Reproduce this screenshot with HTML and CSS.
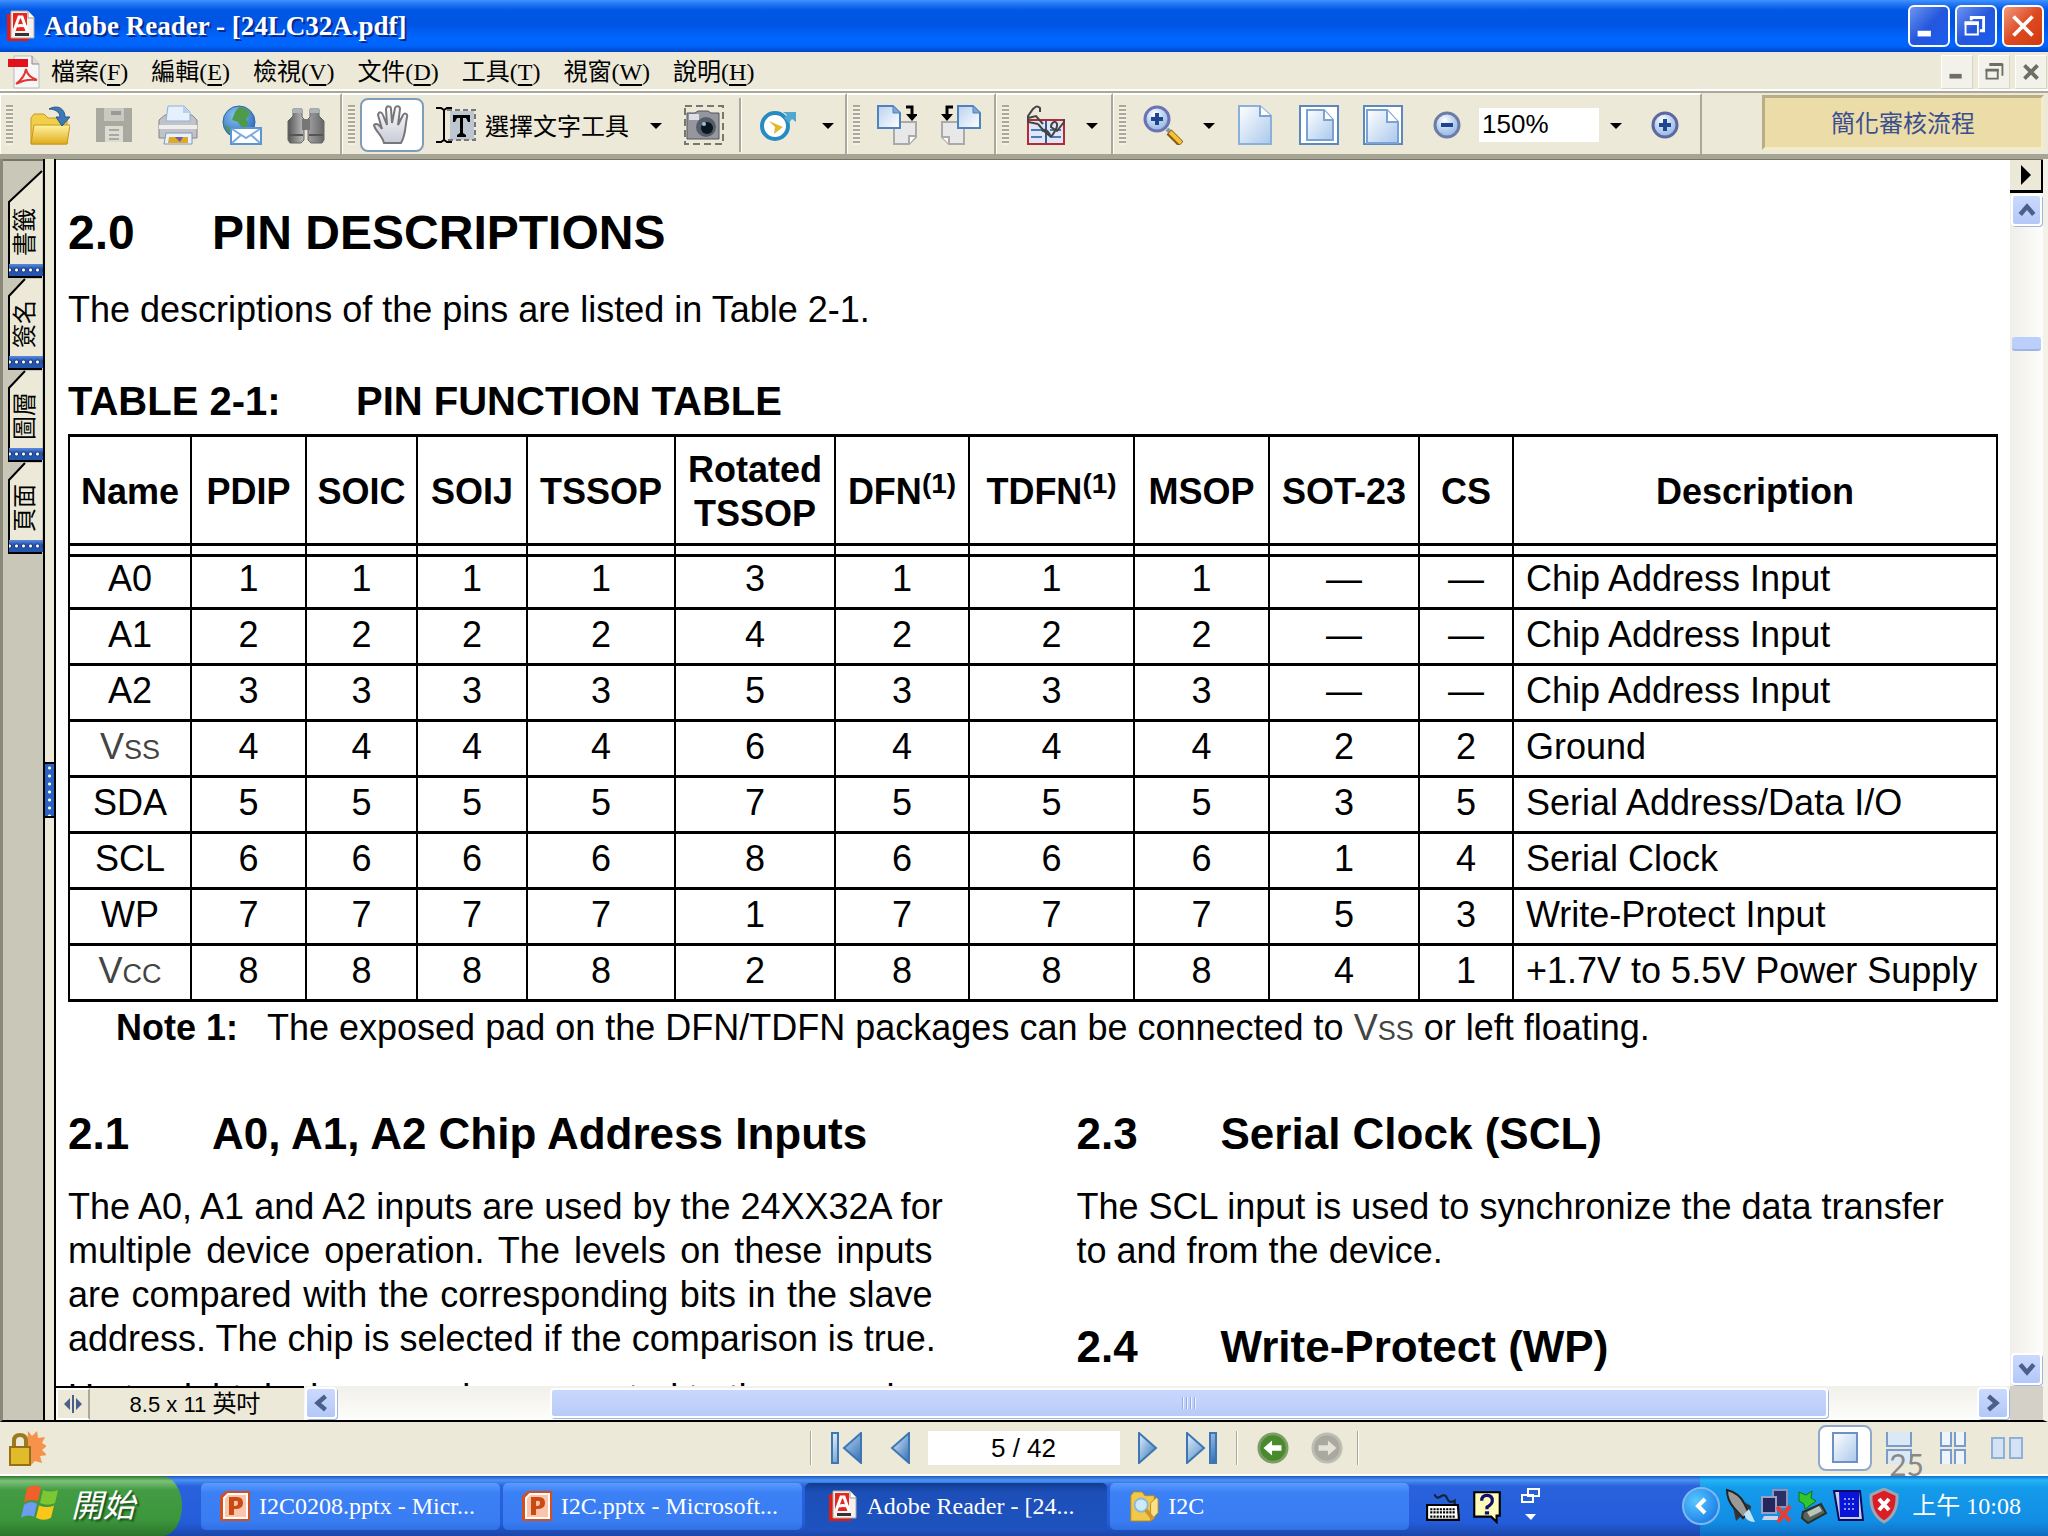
FILE: index.html
```html
<!DOCTYPE html>
<html lang="zh-Hant">
<head>
<meta charset="utf-8">
<title>Adobe Reader - [24LC32A.pdf]</title>
<link rel="stylesheet" href="styles.css">
</head>
<body>
<svg class="defs" aria-hidden="true">
  <defs>
    <linearGradient id="pg" x1="0" y1="0" x2="1" y2="1"><stop offset="0" stop-color="#b9d2f0"/><stop offset="1" stop-color="#fff"/></linearGradient>
    <linearGradient id="pgr" x1="0" y1="0" x2="1" y2="1"><stop offset="0" stop-color="#fff"/><stop offset="1" stop-color="#a9c8ec"/></linearGradient>
    <linearGradient id="fold" x1="0" y1="0" x2="0" y2="1"><stop offset="0" stop-color="#fff3a0"/><stop offset="1" stop-color="#e0ac1c"/></linearGradient>
    <linearGradient id="nav" x1="0" y1="0" x2="1" y2="1"><stop offset="0" stop-color="#e3f2fc"/><stop offset="1" stop-color="#2d6cb4"/></linearGradient>
    <radialGradient id="ball" cx=".4" cy=".3" r=".8"><stop offset="0" stop-color="#fff"/><stop offset=".5" stop-color="#b7d0ee"/><stop offset="1" stop-color="#8bb0de"/></radialGradient>
    <radialGradient id="globe" cx=".4" cy=".3" r=".8"><stop offset="0" stop-color="#8cc4f4"/><stop offset="1" stop-color="#1f5fb4"/></radialGradient>
    <linearGradient id="metal" x1="0" y1="0" x2="1" y2="0"><stop offset="0" stop-color="#555"/><stop offset=".4" stop-color="#b5b5b5"/><stop offset="1" stop-color="#666"/></linearGradient>
    <linearGradient id="glove" x1="0" y1="0" x2="0" y2="1"><stop offset="0" stop-color="#fff"/><stop offset="1" stop-color="#c8cad6"/></linearGradient>
    <symbol id="i-adobe" viewBox="0 0 30 32"><path d="M1 4h22v27H1z" fill="#e01b12"/><path d="M5 1h17l6 6v21H5z" fill="#f4f0ee" stroke="#aaa"/><path d="M7 3h14v18H7z" fill="#e5271d"/><path d="M22 1v7h6" fill="#fff" stroke="#999"/><path d="M8 21l5-14h3l5 14M11 16c4-1 6-1 10 1" fill="none" stroke="#fff" stroke-width="3"/><path d="M9 23h14v3H9z" fill="#333"/></symbol>
    <symbol id="i-ppt" viewBox="0 0 32 32"><path d="M1 6l6-5h24v30H1z" fill="#d3501c"/><path d="M5 8l4-4h19v24H5z" fill="#fbc4ac" stroke="#fff" stroke-width="2"/><path d="M10 7h8q6 0 6 6t-8 6h-1v6h-5M15 11v5h1q3 0 3-3t-3-2z" fill="#cb4a12" fill-rule="evenodd"/></symbol>
    <symbol id="i-plus" viewBox="0 0 28 28"><circle cx="14" cy="14" r="12" fill="url(#ball)" stroke="#5d67a0" stroke-width="3"/><path d="M8 14h12M14 8v12" stroke="#1f4590" stroke-width="4"/></symbol>
    <symbol id="i-minus" viewBox="0 0 28 28"><circle cx="14" cy="14" r="12" fill="url(#ball)" stroke="#6d7ba8" stroke-width="3"/><path d="M8 14h12" stroke="#1f4590" stroke-width="4"/></symbol>
    <symbol id="i-chev" viewBox="0 0 16 16"><path d="M2 12l6-7 6 7" fill="none" stroke="#4a5f8a" stroke-width="4"/></symbol>
  </defs>
</svg>

<header class="titlebar">
  <svg class="ico-app"><use href="#i-adobe"/></svg>
  <h1 class="window-title">Adobe Reader - [24LC32A.pdf]</h1>
  <div class="window-buttons">
    <button class="win-btn" aria-label="最小化"><svg viewBox="0 0 40 40"><path d="M8 25h14v6H8z" fill="#fff"/></svg></button>
    <button class="win-btn" aria-label="還原"><svg viewBox="0 0 40 40"><path d="M15 14v-3h13v14h-4M15 11h13" fill="none" stroke="#fff" stroke-width="3"/><path d="M9 17h13v12H9z" fill="none" stroke="#fff" stroke-width="2"/><path d="M8 17h15" stroke="#fff" stroke-width="4"/></svg></button>
    <button class="win-btn win-close" aria-label="關閉"><svg viewBox="0 0 40 40"><path d="M10 10l20 20M30 10L10 30" stroke="#fff" stroke-width="4"/></svg></button>
  </div>
</header>

<nav class="menubar">
  <svg class="ico-doc" viewBox="0 0 32 34"><path d="M6 1h18l7 8v24H6z" fill="#f6f6f6" stroke="#bbb"/><path d="M24 1v8h7" fill="#ddd" stroke="#888"/><path d="M0 4h20v8H0z" fill="#e1121b"/><path d="M8 29c4-3 9-9 10-15 1 6 5 9 11 11-7-1-14 0-21 4z" fill="none" stroke="#e1372f" stroke-width="2"/></svg>
  <button class="menu">檔案(<u>F</u>)</button>
  <button class="menu">編輯(<u>E</u>)</button>
  <button class="menu">檢視(<u>V</u>)</button>
  <button class="menu">文件(<u>D</u>)</button>
  <button class="menu">工具(<u>T</u>)</button>
  <button class="menu">視窗(<u>W</u>)</button>
  <button class="menu">說明(<u>H</u>)</button>
  <div class="mdi-buttons">
    <button class="mdi" aria-label="最小化文件"><svg viewBox="0 0 32 32"><path d="M8 18h13v5H8z" fill="#6f6e64"/></svg></button>
    <button class="mdi" aria-label="還原文件"><svg viewBox="0 0 32 32"><path d="M12 8h13v12M8 14h12v9H8z" fill="none" stroke="#6f6e64" stroke-width="2"/><path d="M11 8h14M7 14h14" stroke="#6f6e64" stroke-width="3"/></svg></button>
    <button class="mdi" aria-label="關閉文件"><svg viewBox="0 0 32 32"><path d="M9 9l14 14M23 9L9 23" stroke="#6f6e64" stroke-width="4"/></svg></button>
  </div>
</nav>

<div class="toolbar">
  <div class="group g-file">
    <span class="grip"></span>
    <button class="tool" aria-label="開啟"><svg viewBox="0 0 40 40"><path d="M1 13l3-4h10l4 4h19v26H1z" fill="#f2cf4a" stroke="#c8971a"/><path d="M4 20h36l-3 19H1z" fill="url(#fold)" stroke="#c8971a"/><path d="M19 4C28-1 35 4 35 12h5l-8 9-6-9h4c0-5-5-8-11-8z" fill="#3d78b8" stroke="#2a5688"/></svg></button>
    <button class="tool" aria-label="儲存"><svg viewBox="0 0 40 40"><path d="M2 3h36v34H2z" fill="#a9a9a0"/><path d="M10 3h20v13H10z" fill="#c9c9c0"/><path d="M17 6h10v4H17z" fill="#999"/><path d="M11 21h18v16H11z" fill="#dcdcd4"/><path d="M15 25h10M15 30h10M15 34h10" stroke="#a9a9a0" stroke-width="2"/></svg></button>
    <button class="tool" aria-label="列印"><svg viewBox="0 0 40 40"><path d="M1 15l6-5h27l5 5v18H1z" fill="#c2c3c8" stroke="#85868e"/><path d="M10 1h16l6 6v9H8z" fill="#e5f0fb" stroke="#8bb1d8"/><path d="M25 1v7h7" fill="#b3d0ee"/><path d="M1 20h38v4H1z" fill="#eee"/><path d="M8 28h26v11H6z" fill="#e8f2fb" stroke="#8098b0"/><path d="M11 32h19v6H10z" fill="#e0a92a"/><path d="M17 32l5 5 3-5" fill="#7a55a0"/></svg></button>
    <button class="tool" aria-label="電子郵件"><svg viewBox="0 0 40 40"><circle cx="17" cy="17" r="16" fill="url(#globe)" stroke="#2b66a8"/><path d="M17 2q7 0 11 6l-4 6 3 5-6 5-5-7-6-2 3-8zM3 20l6 3 3 8q-7-3-9-11z" fill="#4f9a48"/><path d="M9 23h30v16H9z" fill="#fff" stroke="#5a94d8" stroke-width="2"/><path d="M10 24l14 9 14-9M10 38l9-8M38 38l-9-8" fill="none" stroke="#7aaae0" stroke-width="2"/></svg></button>
    <button class="tool" aria-label="搜尋"><svg viewBox="0 0 40 40"><path d="M7 4h9v8l2 2v21l-3 3H4l-2-3V16l5-5zM33 4h-9v8l-2 2v21l3 3h11l2-3V16l-5-5z" fill="url(#metal)" stroke="#666"/><path d="M16 14h8v11h-8z" fill="#777"/><path d="M7 4h9v4H7zM24 4h9v4h-9z" fill="#aab3ba"/><path d="M3 30h14M23 30h14" stroke="#555" stroke-width="2"/></svg></button>
  </div>
  <div class="group g-select">
    <span class="grip"></span>
    <button class="tool selected" aria-label="手形工具"><svg viewBox="0 0 40 40"><path d="M12 38c-2-8-9-12-10-18 3-3 6 1 8 4L6 10c1-4 4-3 5 0l4 10L14 4c1-4 5-3 5 0l1 14 3-15c1-3 5-2 5 1l-2 16 5-10c2-3 5-1 4 2-2 9-1 18-6 26z" fill="url(#glove)" stroke="#777" stroke-width="2"/></svg></button>
    <button class="text-tool"><svg viewBox="0 0 42 40"><path d="M15 6h24v29H15z" fill="#bcc7d2"/><path d="M12 5h28v30H12" fill="none" stroke="#777" stroke-width="2" stroke-dasharray="5 3"/><path d="M1 3h5l3 2 3-2h5M1 37h5l3-2 3 2h5M9 4v32" fill="none" stroke="#000" stroke-width="2"/><path d="M18 10h17v7h-2l-2-4h-3v15l3 2v2h-9v-2l3-2V13h-3l-2 4h-2z"/></svg>選擇文字工具</button>
    <button class="caret" aria-label="選取工具選單"></button>
    <button class="tool snap" aria-label="快照"><svg viewBox="0 0 40 40"><path d="M1 1h38v38H1z" fill="none" stroke="#77776d" stroke-width="2" stroke-dasharray="7 4"/><path d="M3 8h8l3-2h10l3 2h8v26H3z" fill="#96969f" stroke="#55555d"/><path d="M5 9h10v6H5z" fill="#dedee8"/><circle cx="22" cy="22" r="10" fill="#555e68"/><circle cx="23" cy="23" r="6" fill="#0b1620"/><circle cx="20" cy="19" r="2" fill="#9dc3d8"/></svg></button>
    <span class="sep"></span>
    <button class="tool" aria-label="下一步"><svg viewBox="0 0 40 40"><circle cx="17" cy="21" r="13" fill="#fff" stroke="#268bc2" stroke-width="4"/><path d="M25 7h13v10l-4-3-3 4-5-5 3-3z" fill="#51a9cf"/><path d="M11 16l14 6-9 7 1-7z" fill="#e0b92e"/></svg></button>
    <button class="caret" aria-label="下一步選單"></button>
  </div>
  <div class="group g-rotate">
    <span class="grip"></span>
    <button class="tool" aria-label="順時針旋轉"><svg viewBox="0 0 40 40"><path d="M17 17h22v15l-7 7H17z" fill="#e8e8e8" stroke="#aaa" stroke-width="2"/><path d="M39 31h-7v8" fill="#fff" stroke="#aaa" stroke-width="2"/><path d="M1 1h15l7 7v15H1z" fill="url(#pg)" stroke="#5082bd" stroke-width="2"/><path d="M16 1v7h7" fill="#7fa8d8" stroke="#5082bd"/><path d="M29 2h6v10" fill="none" stroke="#000" stroke-width="3"/><path d="M29 9h12l-6 7z"/></svg></button>
    <button class="tool" aria-label="逆時針旋轉"><svg viewBox="0 0 40 40"><path d="M1 17h22v22H8l-7-7z" fill="#e8e8e8" stroke="#aaa" stroke-width="2"/><path d="M1 32h7v7" fill="#fff" stroke="#aaa" stroke-width="2"/><path d="M17 1h15l7 7v15H17z" fill="url(#pg)" stroke="#5082bd" stroke-width="2"/><path d="M32 1v7h7" fill="#7fa8d8" stroke="#5082bd"/><path d="M12 2H6v10" fill="none" stroke="#000" stroke-width="3"/><path d="M0 9h12l-6 7z"/></svg></button>
  </div>
  <div class="group g-review">
    <span class="grip"></span>
    <button class="tool" aria-label="檢閱"><svg viewBox="0 0 40 40"><path d="M2 15h36v24H2z" fill="#e0e6f8" stroke="#b52a34" stroke-width="2"/><path d="M20 16v22" stroke="#2d6090" stroke-width="2"/><path d="M5 25h11M5 32h11M24 25h11M24 32h11" stroke="#4a78b8" stroke-width="2"/><path d="M14 7V3c-3-3-5-1-7 1L2 11v6l10 2M2 13l8-2 7 8M12 19l6 7 7 6c-2-5-5-8-7-7s-2 1 0 1M25 32c3-4 7-9 6-13s-6-2-6 3l6 4 7-9v-3" fill="none" stroke="#444" stroke-width="2"/></svg></button>
    <button class="caret" aria-label="檢閱選單"></button>
  </div>
  <div class="group g-zoom">
    <span class="grip"></span>
    <button class="tool" aria-label="放大工具"><svg viewBox="0 0 40 40"><path d="M24 24l5 5" stroke="#89a" stroke-width="4"/><path d="M26 27l12 12" stroke="#8a5a12" stroke-width="7"/><path d="M27 27l11 11" stroke="#f3c332" stroke-width="4"/><circle cx="14" cy="14" r="12" fill="url(#ball)" stroke="#6b73b4" stroke-width="3"/><path d="M8 14h12M14 8v12" stroke="#1f4590" stroke-width="4"/></svg></button>
    <button class="caret" aria-label="縮放選單"></button>
    <button class="tool" aria-label="實際大小"><svg viewBox="0 0 40 40"><path d="M4 1h21l11 10v28H4z" fill="url(#pgr)" stroke="#8db0da" stroke-width="2"/><path d="M25 1v10h11" fill="#fff" stroke="#7aa2d2" stroke-width="2"/></svg></button>
    <button class="tool" aria-label="符合頁面"><svg viewBox="0 0 40 40"><path d="M1 1h38v38H1z" fill="#fff" stroke="#5c89bd" stroke-width="2"/><path d="M8 5h17l9 10v20H8z" fill="url(#pgr)" stroke="#7aa2d2" stroke-width="2"/><path d="M25 5v10h9" fill="#fff" stroke="#7aa2d2" stroke-width="2"/></svg></button>
    <button class="tool" aria-label="符合寬度"><svg viewBox="0 0 40 40"><path d="M1 1h38v38H1z" fill="#fff" stroke="#5c89bd" stroke-width="2"/><path d="M4 38V5h20l11 12v21z" fill="url(#pgr)" stroke="#7aa2d2" stroke-width="2"/><path d="M24 5v12h11" fill="#fff" stroke="#7aa2d2" stroke-width="2"/></svg></button>
    <button class="tool round" aria-label="縮小"><svg><use href="#i-minus"/></svg></button>
    <input class="zoom-value" aria-label="縮放比例" value="150%">
    <button class="caret" aria-label="縮放比例選單"></button>
    <button class="tool round" aria-label="放大"><svg><use href="#i-plus"/></svg></button>
  </div>
  <a class="promo" href="#">簡化審核流程</a>
</div>

<main class="workspace">
  <aside class="side">
    <button class="tab tab-first"><svg viewBox="0 0 36 108" preserveAspectRatio="none"><path d="M35 1L2 32v75h33" fill="#ece9d8" stroke="#000" stroke-width="2"/></svg><span>書籤</span></button>
    <button class="tab"><svg viewBox="0 0 36 92" preserveAspectRatio="none"><path d="M18 1L2 18v73h33V1" fill="#ece9d8"/><path d="M18 1L2 18v73h33" fill="none" stroke="#000" stroke-width="2"/></svg><span>簽名</span></button>
    <button class="tab"><svg viewBox="0 0 36 92" preserveAspectRatio="none"><path d="M18 1L2 18v73h33V1" fill="#ece9d8"/><path d="M18 1L2 18v73h33" fill="none" stroke="#000" stroke-width="2"/></svg><span>圖層</span></button>
    <button class="tab"><svg viewBox="0 0 36 92" preserveAspectRatio="none"><path d="M18 1L2 18v73h33V1" fill="#ece9d8"/><path d="M18 1L2 18v73h33" fill="none" stroke="#000" stroke-width="2"/></svg><span>頁面</span></button>
  </aside>
  <div class="splitter"><span class="splitter-handle"></span></div>
  <div class="pane">
    <div class="view">
      <article class="page">
        <h2 class="h-main"><span class="num">2.0</span>PIN DESCRIPTIONS</h2>
        <p class="intro">The descriptions of the pins are listed in Table 2-1.</p>
        <h3 class="caption"><span class="tnum">TABLE 2-1:</span>PIN FUNCTION TABLE</h3>
        <table class="pins">
          <colgroup><col class="c-name"><col class="c-pdip"><col class="c-soic"><col class="c-soij"><col class="c-tssop"><col class="c-rot"><col class="c-dfn"><col class="c-tdfn"><col class="c-msop"><col class="c-sot"><col class="c-cs"><col></colgroup>
          <thead><tr><th>Name</th><th>PDIP</th><th>SOIC</th><th>SOIJ</th><th>TSSOP</th><th>Rotated TSSOP</th><th>DFN<sup>(1)</sup></th><th>TDFN<sup>(1)</sup></th><th>MSOP</th><th>SOT-23</th><th>CS</th><th>Description</th></tr></thead>
          <tbody>
            <tr><td>A0</td><td>1</td><td>1</td><td>1</td><td>1</td><td>3</td><td>1</td><td>1</td><td>1</td><td>—</td><td>—</td><td>Chip Address Input</td></tr>
            <tr><td>A1</td><td>2</td><td>2</td><td>2</td><td>2</td><td>4</td><td>2</td><td>2</td><td>2</td><td>—</td><td>—</td><td>Chip Address Input</td></tr>
            <tr><td>A2</td><td>3</td><td>3</td><td>3</td><td>3</td><td>5</td><td>3</td><td>3</td><td>3</td><td>—</td><td>—</td><td>Chip Address Input</td></tr>
            <tr><td class="sig">V<small>SS</small></td><td>4</td><td>4</td><td>4</td><td>4</td><td>6</td><td>4</td><td>4</td><td>4</td><td>2</td><td>2</td><td>Ground</td></tr>
            <tr><td>SDA</td><td>5</td><td>5</td><td>5</td><td>5</td><td>7</td><td>5</td><td>5</td><td>5</td><td>3</td><td>5</td><td>Serial Address/Data I/O</td></tr>
            <tr><td>SCL</td><td>6</td><td>6</td><td>6</td><td>6</td><td>8</td><td>6</td><td>6</td><td>6</td><td>1</td><td>4</td><td>Serial Clock</td></tr>
            <tr><td>WP</td><td>7</td><td>7</td><td>7</td><td>7</td><td>1</td><td>7</td><td>7</td><td>7</td><td>5</td><td>3</td><td>Write-Protect Input</td></tr>
            <tr><td class="sig">V<small>CC</small></td><td>8</td><td>8</td><td>8</td><td>8</td><td>2</td><td>8</td><td>8</td><td>8</td><td>4</td><td>1</td><td>+1.7V to 5.5V Power Supply</td></tr>
          </tbody>
        </table>
        <p class="note"><b>Note 1:</b><span>The exposed pad on the DFN/TDFN packages can be connected to <span class="sig">V<small>SS</small></span> or left floating.</span></p>
        <div class="columns">
          <section>
            <h3 class="h-sub"><span class="num">2.1</span>A0, A1, A2 Chip Address Inputs</h3>
            <p>
              <span class="line">The A0, A1 and A2 inputs are used by the 24XX32A for</span>
              <span class="line">multiple device operation. The levels on these inputs</span>
              <span class="line">are compared with the corresponding bits in the slave</span>
              <span class="line last">address. The chip is selected if the comparison is true.</span>
            </p>
            <p><span class="line">Up to eight devices may be connected to the same bus</span></p>
          </section>
          <section>
            <h3 class="h-sub"><span class="num">2.3</span>Serial Clock (SCL)</h3>
            <p>
              <span class="line">The SCL input is used to synchronize the data transfer</span>
              <span class="line last">to and from the device.</span>
            </p>
            <h3 class="h-sub h-next"><span class="num">2.4</span>Write-Protect (WP)</h3>
          </section>
        </div>
      </article>
      <div class="vscroll">
        <button class="flyout" aria-label="文件選單"><svg viewBox="0 0 10 20"><path d="M0 0l10 10L0 20z"/></svg></button>
        <button class="sb" aria-label="向上"><svg><use href="#i-chev"/></svg></button>
        <div class="vtrack"><span class="vthumb"></span></div>
        <button class="sb" aria-label="向下"><svg class="down"><use href="#i-chev"/></svg></button>
      </div>
    </div>
    <div class="hscroll">
      <div class="size-box">
        <button class="split" aria-label="隱藏頁面大小"><svg viewBox="0 0 20 20"><path d="M10 1v18" stroke="#4a5f8a" stroke-width="2"/><path d="M7 4v12l-6-6zM13 4v12l6-6z" fill="#4a5f8a"/></svg></button>
        <span class="size">8.5 x 11 <span class="unit">英吋</span></span>
      </div>
      <button class="sb" aria-label="向左"><svg class="left"><use href="#i-chev"/></svg></button>
      <div class="htrack"><span class="hthumb"><i></i><i></i><i></i><i></i></span></div>
      <button class="sb" aria-label="向右"><svg class="right"><use href="#i-chev"/></svg></button>
      <span class="corner"></span>
    </div>
  </div>
</main>

<div class="statusbar">
  <svg class="lock" viewBox="0 0 38 38"><path d="M20 2l4 5 5-5 1 7 7-1-3 6 5 3-5 4 5 5-7 1 2 7-7-2-5 5-4-6z" fill="#f6924a"/><path d="M6 18v-6q0-6 6-6t6 6v6" fill="none" stroke="#9a7a1c" stroke-width="4"/><path d="M2 18h20v18H2z" fill="#e2bb2c" stroke="#967014" stroke-width="2"/></svg>
  <div class="pager">
    <span class="sep"></span>
    <button class="nav" aria-label="第一頁"><svg viewBox="0 0 32 32"><path d="M1 1h6v30H1zM30 1v30L13 16z" fill="url(#nav)" stroke="#3d76b5" stroke-width="2"/></svg></button>
    <button class="nav" aria-label="上一頁"><svg viewBox="0 0 32 32"><path d="M24 1v30L7 16z" fill="url(#nav)" stroke="#3d76b5" stroke-width="2"/></svg></button>
    <input class="page-no" aria-label="頁碼" value="5 / 42">
    <button class="nav" aria-label="下一頁"><svg viewBox="0 0 32 32"><path d="M8 1v30l17-15z" fill="url(#nav)" stroke="#3d76b5" stroke-width="2"/></svg></button>
    <button class="nav" aria-label="最後一頁"><svg viewBox="0 0 32 32"><path d="M31 1h-6v30h6zM2 1v30l17-15z" fill="url(#nav)" stroke="#3d76b5" stroke-width="2"/></svg></button>
    <span class="sep"></span>
    <button class="nav" aria-label="上一檢視"><svg viewBox="0 0 34 34"><circle cx="17" cy="17" r="15" fill="#488a2c" stroke="#7c9c68" stroke-width="3"/><path d="M7 17l9-8v5h10v6H16v5z" fill="#fff"/></svg></button>
    <button class="nav" aria-label="下一檢視"><svg viewBox="0 0 34 34"><circle cx="17" cy="17" r="15" fill="#aaa99f" stroke="#bebdb2" stroke-width="3"/><path d="M27 17l-9-8v5H8v6h10v5z" fill="#e4e3da"/></svg></button>
    <span class="sep"></span>
  </div>
  <div class="views">
    <button class="view-btn view-on" aria-label="單頁"><svg viewBox="0 0 34 34"><path d="M5 2h24v29H5z" fill="url(#pgr)" stroke="#6c92c4" stroke-width="2"/></svg></button>
    <button class="view-btn" aria-label="連續"><svg viewBox="0 0 34 34"><path d="M5 1v14h24V1M5 33V19h24v14" fill="#dbe8f6" stroke="#7a9cca" stroke-width="2"/></svg></button>
    <button class="view-btn" aria-label="連續對頁"><svg viewBox="0 0 34 34"><path d="M5 1v14h10V1M19 1v14h10V1M5 33V19h10v14M19 33V19h10v14" fill="#eef4fb" stroke="#7a9cca" stroke-width="2"/></svg></button>
    <button class="view-btn" aria-label="對頁"><svg viewBox="0 0 34 34"><path d="M2 7h12v20H2zM20 7h12v20H20z" fill="#d3e3f5" stroke="#8fb0d8" stroke-width="2"/></svg></button>
    <span class="slide-no">25</span>
  </div>
</div>

<footer class="taskbar">
  <button class="start"><svg viewBox="0 0 38 44" preserveAspectRatio="none"><path d="M6 4q7-6 14-1l-3 17q-7-4-14 1z" fill="#f1602a"/><path d="M22 6q7 4 15 0l-3 16q-7 4-15 0z" fill="#7cc832"/><path d="M3 24q7-5 13-1l-3 16q-6-4-13 1z" fill="#6c9cf4"/><path d="M18 25q8 4 15 0l-3 15q-7 5-15 0z" fill="#fbc719"/></svg>開始</button>
  <div class="tasks">
    <button class="task"><svg><use href="#i-ppt"/></svg>I2C0208.pptx - Micr...</button>
    <button class="task"><svg><use href="#i-ppt"/></svg>I2C.pptx - Microsoft...</button>
    <button class="task task-on"><svg><use href="#i-adobe"/></svg>Adobe Reader - [24...</button>
    <button class="task"><svg viewBox="0 0 32 34"><path d="M2 6l3-4h9l3 4h10v24l-4 3H2z" fill="#f0c84a" stroke="#b88718"/><path d="M29 8l2 2v14l-8 9V14z" fill="#fbe28a" stroke="#b88718"/><circle cx="13" cy="16" r="7" fill="#cdeafa" stroke="#8cb8d8" stroke-width="2"/><path d="M18 21l7 9" stroke="#d0942a" stroke-width="4"/></svg>I2C</button>
  </div>
  <div class="langbar">
    <button class="mini" aria-label="鍵盤"><svg viewBox="0 0 32 32"><path d="M8 5q2 5 6 2t6 2 7 2v5" fill="none" stroke="#123" stroke-width="2"/><path d="M1 15h29l1 14H1z" fill="#fff" stroke="#000" stroke-width="2"/><path d="M4 19h24M4 22h24M4 26h24" stroke="#000" stroke-width="2" stroke-dasharray="2 1"/></svg></button>
    <button class="mini" aria-label="說明"><svg viewBox="0 0 32 32"><path d="M4 3h24v22h-3v6l-5-5H4z" fill="#fffbb8" stroke="#000" stroke-width="2"/><path d="M11 11q0-5 5-5t5 5q0 3-5 6v2" fill="none" stroke="#10106c" stroke-width="3"/><path d="M14 21h4v3h-4z" fill="#10106c"/></svg></button>
    <button class="mini" aria-label="語言列選項"><svg viewBox="0 0 24 36"><path d="M9 1h11v7H9zM3 7h11v7H3z" fill="#2a5fd8" stroke="#fff" stroke-width="2"/><path d="M6 26h11l-5 6z" fill="#fff"/></svg></button>
  </div>
  <div class="tray">
    <button class="chevron" aria-label="顯示隱藏的圖示"><svg viewBox="0 0 20 20"><path d="M14 3l-7 7 7 7" fill="none" stroke="#fff" stroke-width="4"/></svg></button>
    <svg class="tray-ico" viewBox="0 0 32 36"><path d="M3 2q12 3 17 13l5 10-6 5-9-10Q3 12 3 2z" fill="#9a9a98" stroke="#222" stroke-width="2"/><path d="M9 19l3 14 5-5M20 14l7 4-1 6" fill="#333"/><path d="M20 26l5-5 6 13q-9 0-11-8z" fill="#bfe4fa"/></svg>
    <svg class="tray-ico" viewBox="0 0 32 36"><path d="M13 2h14v17H13z" fill="#2b2f68" stroke="#8c92b8" stroke-width="2"/><path d="M2 9h14v16H2z" fill="#23275e" stroke="#9aa0c4" stroke-width="2"/><path d="M4 28h14v4H2z" fill="#cfd2e8"/><path d="M17 19l13 14M30 18L18 34" stroke="#ee3b30" stroke-width="4"/></svg>
    <svg class="tray-ico" viewBox="0 0 32 36"><path d="M7 24l18-8 5 9-18 10-6-5z" fill="#59635c" stroke="#26302a" stroke-width="2"/><path d="M11 24l12-6 3 5-12 6z" fill="#b8c4bc"/><path d="M3 4l7 3 6-4-1 7 5 3-11 8-1-5-5-3z" fill="#2fc62f" stroke="#157015"/></svg>
    <svg class="tray-ico" viewBox="0 0 32 36"><path d="M2 3h26l3 29H7z" fill="#c8d0e8" stroke="#0a0a60" stroke-width="2"/><path d="M7 4h20v25H8z" fill="#0a14d8"/><path d="M12 11h12M12 16h12M12 21h12" stroke="#7c9cf8" stroke-width="2" stroke-dasharray="2 2"/></svg>
    <svg class="tray-ico" viewBox="0 0 32 36"><path d="M16 1l13 6q1 19-13 27Q2 26 3 7z" fill="#db1d24" stroke="#9ba5b4" stroke-width="3"/><path d="M11 11l10 11M21 11L11 22" stroke="#fff" stroke-width="4"/></svg>
    <time class="clock">上午 10:08</time>
  </div>
</footer>
</body>
</html>
```
FILE: styles.css
```css
* { box-sizing: border-box; }

body {
  margin: 0;
  height: 100vh;
  display: flex;
  flex-direction: column;
  overflow: hidden;
  background: #ece9d8;
  color: #000;
  font-family: "Liberation Sans", "Noto Sans CJK TC", sans-serif;
  font-size: 24px;
}

button, input {
  margin: 0;
  padding: 0;
  border: 0;
  background: none;
  color: inherit;
  font: inherit;
}

h1, h2, h3, p { margin: 0; }
svg { display: block; flex: none; }
.defs { position: absolute; width: 0; height: 0; }

/* Title bar */
.titlebar {
  flex: none;
  height: 52px;
  padding: 0 4px 0 6px;
  display: flex;
  align-items: center;
  gap: 8px;
  background: linear-gradient(#3f95ff 0, #2a7cf8 3px, #0058e4 10px, #0054e3 24px, #0066ff 38px, #0064fb 46px, #0046c8 52px);
}
.ico-app { width: 30px; height: 32px; }
.window-title {
  flex: 1;
  font: bold 27px/40px "Liberation Serif", serif;
  color: #fff;
  text-shadow: 2px 2px 0 #0a2a8c;
}
.window-buttons { display: flex; gap: 5px; }
.win-btn {
  width: 42px;
  height: 42px;
  border: 2px solid #fff;
  border-radius: 6px;
  background: linear-gradient(135deg, #6d94f0, #2457dd 50%, #1a5cf0);
}
.win-close { background: linear-gradient(135deg, #f09a80, #dd4a22 50%, #d03a10); }
.win-btn svg { width: 38px; height: 38px; }

/* Menu bar */
.menubar {
  flex: none;
  height: 39px;
  padding: 0 1px 0 8px;
  display: flex;
  align-items: center;
  gap: 23px;
}
.ico-doc { width: 32px; height: 34px; margin-right: -12px; }
.menu {
  font: 24px/34px "Liberation Serif", "Noto Sans CJK TC", serif;
  white-space: nowrap;
}
.menu u { text-underline-offset: 4px; text-decoration-thickness: 2px; }
.mdi-buttons { display: flex; gap: 5px; margin-left: auto; }
.mdi {
  width: 32px;
  height: 34px;
  background: #f3f2ea;
  border: 1px solid #fff;
  border-right-color: #d8d5c4;
  border-bottom-color: #d8d5c4;
}
.mdi svg { width: 30px; height: 32px; }

/* Toolbar */
.toolbar {
  flex: none;
  height: 68px;
  display: flex;
  border-top: 2px solid #aca899;
  border-bottom: 5px solid #a6a493;
  box-shadow: 0 -2px 0 #fff;
}
.group {
  flex: none;
  display: flex;
  align-items: center;
  padding-left: 5px;
  border-top: 2px solid #fff;
  border-left: 1px solid #fff;
  border-right: 2px solid #aca899;
}
.g-file { width: 342px; }
.g-select { width: 505px; }
.g-rotate { width: 149px; }
.g-review { width: 117px; }
.g-zoom { width: 589px; }
.grip {
  flex: none;
  width: 7px;
  height: 40px;
  margin-right: 5px;
  background: repeating-linear-gradient(#aca899 0 2px, #f4f2e6 2px 4px);
}
.sep {
  flex: none;
  width: 3px;
  height: 54px;
  background: #aca899;
  border-right: 1px solid #fff;
}
.tool {
  width: 64px;
  height: 54px;
  display: flex;
  align-items: center;
  justify-content: center;
  flex: none;
}
.tool svg { width: 40px; height: 40px; }
.selected {
  background: #fff;
  border: 2px solid #7f9db9;
  border-radius: 8px;
}
.text-tool {
  flex: none;
  display: flex;
  align-items: center;
  gap: 8px;
  margin-left: 11px;
  font-size: 24px;
  white-space: nowrap;
}
.text-tool svg { width: 42px; height: 40px; }
.caret { width: 28px; height: 54px; flex: none; }
.caret::before {
  content: "";
  display: block;
  width: 0;
  margin: 2px auto 0;
  border: 6px solid transparent;
  border-top-color: #000;
  border-bottom: 0;
}
.text-tool + .caret { width: 54px; }
.snap { width: 42px; margin-right: 14px; }
.g-select .sep + .tool { width: 72px; }
.tool.round svg { width: 28px; height: 28px; }
.zoom-value {
  flex: none;
  width: 120px;
  height: 34px;
  padding: 0 3px;
  background: #fff;
  font-size: 26px;
}
.zoom-value + .caret { width: 34px; }
.promo {
  flex: 1;
  margin: 2px 4px 4px 60px;
  background: #ebdca8;
  border: 3px solid #b8ad84;
  border-right-color: #f4ebc8;
  border-bottom-color: #f4ebc8;
  color: #3b4f8f;
  line-height: 52px;
  text-align: center;
  text-decoration: none;
}

/* Workspace */
.workspace {
  flex: 1;
  min-height: 0;
  display: flex;
  border-left: 3px solid #8a8878;
  border-right: 5px solid #f4f2e8;
  border-bottom: 2px solid #000;
}
.side {
  flex: none;
  width: 40px;
  padding: 9px 0 0 4px;
  background: #c9c7b8;
  border-top: 2px solid #77756a;
}
.tab {
  position: relative;
  display: flex;
  align-items: center;
  justify-content: center;
  width: 36px;
  height: 92px;
}
.tab-first { height: 108px; padding-top: 16px; }
.tab svg { position: absolute; inset: 0; width: 100%; height: 100%; }
.tab::after {
  content: "";
  position: absolute;
  left: 2px;
  right: 0;
  bottom: 2px;
  height: 12px;
  background: radial-gradient(circle, #fff 1px, #1c3c80 2px, transparent 3px) 4px 2px / 7px 8px repeat-x, linear-gradient(#5c8ade, #2456b0 40%);
}
.tab span { position: relative; white-space: nowrap; line-height: 32px; transform: rotate(-90deg); }
.splitter {
  flex: none;
  width: 13px;
  display: flex;
  align-items: center;
  background: #ece9d8;
  border-left: 2px solid #000;
  border-right: 2px solid #000;
}
.splitter-handle {
  width: 9px;
  height: 56px;
  background: radial-gradient(circle, #fff 1px, transparent 2px) 0 0 / 9px 8px, #2c62c0;
  border: solid #000;
  border-width: 2px 0;
}
.pane { flex: 1; min-width: 0; display: flex; flex-direction: column; }
.view { flex: 1; min-height: 0; display: flex; background: #fff; border-top: 1px solid #77756a; }

/* Document page */
.page {
  flex: 1;
  min-width: 0;
  overflow: hidden;
  padding: 45px 12px 0;
  font-size: 36px;
  line-height: 44px;
}
.h-main { font-size: 48px; line-height: 56px; }
.num { display: inline-block; width: 144px; }
.intro { margin-top: 27px; }
.caption { margin: 47px 0 11px; font-size: 40px; line-height: 44px; }
.tnum { display: inline-block; width: 288px; }
.pins {
  width: 100%;
  table-layout: fixed;
  border-collapse: collapse;
}
.pins th, .pins td {
  padding: 0;
  border: solid #000;
  border-width: 3px 2px;
  text-align: center;
  white-space: nowrap;
}
.pins th {
  height: 120px;
  padding-bottom: 8px;
  background: linear-gradient(#000, #000) 0 calc(100% - 8px) / 100% 3px no-repeat;
}
.pins th:nth-child(6) { white-space: normal; }
.pins td { height: 56px; padding-bottom: 4px; }
.pins tr:first-child td { height: 51px; padding-bottom: 6px; }
.pins td:last-child { padding-left: 12px; text-align: left; }
.pins sup { font-size: 28px; line-height: 28px; vertical-align: 11px; }
.c-name { width: 122px; }
.c-pdip { width: 115px; }
.c-soic { width: 111px; }
.c-soij { width: 110px; }
.c-tssop { width: 148px; }
.c-rot { width: 160px; }
.c-dfn { width: 134px; }
.c-tdfn { width: 165px; }
.c-msop { width: 135px; }
.c-sot { width: 150px; }
.c-cs { width: 94px; }
.sig { color: #444; }
.sig small { font-size: 27px; line-height: 27px; }
.note { display: flex; margin: 4px 0 0 48px; }
.note b { width: 151px; }
.columns {
  display: grid;
  grid-template-columns: repeat(2, minmax(0, 1fr));
  column-gap: 144px;
  margin: 58px 57px 0 0;
}
.columns p { margin-bottom: 15px; }
.line { display: block; white-space: nowrap; text-align: justify; text-align-last: justify; }
.line.last { text-align-last: left; }
.h-sub { margin-bottom: 25px; font-size: 44px; line-height: 52px; }
.h-next { margin-top: 48px; }

/* Scroll bars */
.vscroll {
  flex: none;
  width: 33px;
  display: flex;
  flex-direction: column;
  background: linear-gradient(90deg, #efeee8, #fdfdfb);
}
.flyout {
  height: 33px;
  background: #ece9d8;
  border: solid #000;
  border-width: 0 2px 3px 0;
}
.flyout svg { width: 10px; height: 20px; margin: auto; }
.sb {
  flex: none;
  width: 32px;
  height: 32px;
  margin: 1px;
  border: 2px solid #fff;
  border-radius: 4px;
  background: linear-gradient(#cbd9fd, #b3c8f8);
  box-shadow: 1px 1px 0 #a0b5e0;
}
.vscroll .sb { width: 31px; }
.sb svg { width: 18px; height: 18px; margin: auto; }
.down { transform: rotate(180deg); }
.left { transform: rotate(-90deg); }
.right { transform: rotate(90deg); }
.vtrack { flex: 1; }
.vthumb {
  display: block;
  height: 14px;
  margin: 110px 2px 0;
  border-radius: 3px;
  background: #bccffb;
  border-bottom: 2px solid #9fb6e4;
}
.hscroll {
  flex: none;
  height: 34px;
  display: flex;
  background: linear-gradient(#f1f0ea, #fdfdfb);
}
.size-box {
  flex: none;
  width: 248px;
  display: flex;
  align-items: center;
  background: #ece9d8;
  border-top: 2px solid #000;
}
.split {
  width: 34px;
  height: 32px;
  border: 2px solid #fff;
  border-right-color: #aca899;
}
.split svg { width: 20px; height: 20px; margin: auto; }
.size { flex: 1; padding-right: 4px; text-align: center; font-size: 22px; line-height: 30px; white-space: nowrap; }
.unit { font-size: 24px; }
.htrack { flex: 1; padding: 2px 148px 0 212px; }
.hthumb {
  display: flex;
  align-items: center;
  justify-content: center;
  gap: 2px;
  height: 30px;
  border: 2px solid #fff;
  border-radius: 4px;
  background: linear-gradient(#c8d7fd, #b8cbf8);
  box-shadow: 1px 1px 0 #a0b5e0;
}
.hthumb i { width: 2px; height: 12px; background: #93aee6; border-right: 1px solid #eef3ff; }
.corner { width: 33px; background: #d4d0c8; }

/* Status bar */
.statusbar {
  flex: none;
  height: 54px;
  display: grid;
  grid-template-columns: 1fr auto 1fr;
  align-items: center;
  padding: 0 14px 0 8px;
  border-bottom: 2px solid #fff;
}
.lock { width: 38px; height: 38px; }
.pager { display: flex; align-items: center; margin-left: 118px; }
.pager .sep { width: 2px; height: 34px; margin: 0 8px; }
.pager .sep:last-child { margin: 0 0 0 3px; }
.nav { width: 54px; height: 34px; }
.nav svg { width: 32px; height: 32px; margin: auto; }
.page-no { width: 192px; height: 34px; background: #fff; text-align: center; font-size: 26px; }
.views { position: relative; display: flex; justify-content: flex-end; }
.view-btn {
  width: 54px;
  height: 46px;
  display: flex;
  align-items: center;
  justify-content: center;
}
.view-btn svg { width: 34px; height: 34px; }
.view-on { background: #fff; border: 2px solid #8ea9cc; border-radius: 8px; }
.slide-no {
  position: absolute;
  right: 110px;
  bottom: -8px;
  font: 30px/30px Lato, sans-serif;
  color: #888;
}

/* Task bar */
.taskbar {
  flex: none;
  height: 60px;
  display: flex;
  align-items: center;
  background: linear-gradient(#1f56c0 0, #4a93f2 4px, #2a62dc 10px, #245ddb 46px, #1b46a8 60px);
  color: #fff;
  font: 24px/30px "Liberation Serif", "Noto Sans CJK TC", serif;
}
.start {
  width: 182px;
  height: 60px;
  display: flex;
  align-items: center;
  gap: 12px;
  padding: 0 0 6px 21px;
  border-radius: 0 20px 20px 0 / 0 30px 30px 0;
  background: linear-gradient(#2f7a2f 0, #7dc07a 5px, #439c43 14px, #3c963c 44px, #2c742c 60px);
  font: italic 32px/44px "Noto Sans CJK TC", sans-serif;
  text-shadow: 2px 2px 2px #1c4c1c;
}
.start svg { width: 38px; height: 36px; }
.tasks { flex: 1; max-width: 1208px; display: flex; gap: 3px; margin-left: 19px; }
.task {
  flex: 1;
  height: 47px;
  display: flex;
  align-items: center;
  gap: 8px;
  padding-left: 18px;
  border-radius: 5px;
  background: linear-gradient(#5a9bff, #3c80f6 20%, #3a7df2 80%, #3070e4);
  white-space: nowrap;
}
.task-on { padding-left: 22px; background: linear-gradient(#123c90, #1c4fb8 20%, #1e52be); }
.task svg { width: 32px; height: 32px; }
.langbar { display: flex; align-items: center; gap: 10px; margin: 0 auto 0 17px; }
.mini svg { width: 34px; height: 36px; }
.tray {
  height: 60px;
  display: flex;
  align-items: center;
  gap: 4px;
  padding-right: 27px;
  background: linear-gradient(#0c6fd0 0, #26b4f6 4px, #149beb 12px, #128de4 46px, #0f6cc0 60px);
}
.chevron {
  width: 38px;
  height: 38px;
  margin-left: -18px;
  border: 2px solid #7fb8ee;
  border-radius: 50%;
  background: radial-gradient(circle at 35% 35%, #58c8ff, #0c6ae0);
}
.chevron svg { width: 20px; height: 20px; margin: auto; }
.tray-ico { width: 32px; height: 36px; }
.clock { margin-left: 8px; white-space: nowrap; }
```
